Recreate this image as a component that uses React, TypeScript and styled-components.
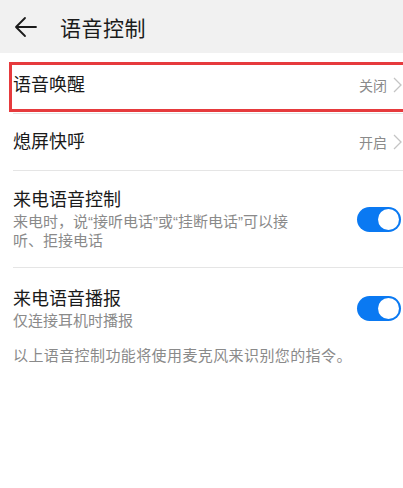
import styled, { createGlobalStyle } from "styled-components";

const GlobalStyle = createGlobalStyle`
  html, body {
    margin: 0;
    padding: 0;
    background: #ffffff;
  }
  body {
    font-family: "Liberation Sans", "Noto Sans CJK SC", sans-serif;
    overflow: hidden;
  }
`;

const Page = styled.div`
  width: 403px;
  height: 488px;
  background: #ffffff;
  overflow: hidden;
`;

const Header = styled.header`
  display: flex;
  align-items: center;
  height: 53px;
  padding: 0 0 0 14px;
  background: #f1f1f1;
  box-sizing: border-box;
`;

const BackButton = styled.button`
  display: flex;
  align-items: center;
  justify-content: center;
  width: 24px;
  height: 24px;
  padding: 0;
  border: none;
  background: none;
  color: #1b1b1b;
`;

const Title = styled.h1`
  margin: 0 0 0 22px;
  font-size: 21px;
  font-weight: 400;
  color: #1b1b1b;
  letter-spacing: 0.5px;
`;

const List = styled.div`
  display: flex;
  flex-direction: column;
  padding-top: 4px;
`;

const Row = styled.div<{ $pad?: string; $last?: boolean }>`
  position: relative;
  display: flex;
  align-items: center;
  min-height: 57px;
  margin-left: 13px;
  padding: ${(p) => p.$pad ?? "0"};
  border-bottom: ${(p) => (p.$last ? "none" : "1px solid #e5e5e5")};
  box-sizing: border-box;
`;

const Highlight = styled.div`
  position: absolute;
  top: 5px;
  left: -4px;
  right: -6px;
  bottom: 1px;
  border: 3px solid #e63a3d;
  pointer-events: none;
`;

const Texts = styled.div`
  flex: 1;
  display: flex;
  flex-direction: column;
  min-width: 0;
`;

const Label = styled.div`
  font-size: 18px;
  line-height: 24px;
  color: #1a1a1a;
`;

const Sub = styled.div`
  max-width: 295px;
  font-size: 15px;
  line-height: 19px;
  color: #8a8a8a;
`;

const Value = styled.span`
  font-size: 14px;
  color: #8a8a8a;
  margin-right: 6px;
`;

const Chevron = styled.svg`
  width: 9px;
  height: 16px;
  margin-right: 1px;
  flex-shrink: 0;
`;

const Toggle = styled.div<{ $on: boolean }>`
  position: relative;
  width: 44px;
  height: 25px;
  margin-right: 2px;
  border-radius: 13px;
  background: ${(p) => (p.$on ? "#0a79f2" : "#d0d0d0")};
  flex-shrink: 0;
`;

const Knob = styled.div<{ $on: boolean }>`
  position: absolute;
  top: 2px;
  left: ${(p) => (p.$on ? "21px" : "2px")};
  width: 21px;
  height: 21px;
  border-radius: 50%;
  background: #ffffff;
`;

const Footer = styled.p`
  margin: 0;
  padding: 0 13px;
  font-size: 15px;
  line-height: 20px;
  letter-spacing: 0.4px;
  color: #8a8a8a;
`;

const Arrow = () => (
  <svg width="24" height="22" viewBox="0 0 24 22" fill="none">
    <path
      d="M22 11H2.5M11 2L2 11L11 20"
      stroke="currentColor"
      strokeWidth="1.8"
      strokeLinecap="round"
      strokeLinejoin="round"
    />
  </svg>
);

const ChevronIcon = () => (
  <Chevron viewBox="0 0 9 16" fill="none">
    <path d="M1 1L8 8L1 15" stroke="#c4c4c4" strokeWidth="1.3" />
  </Chevron>
);

type LinkRowProps = { label: string; value: string; highlight?: boolean };

const LinkRow = ({ label, value, highlight }: LinkRowProps) => (
  <Row>
    <Texts>
      <Label>{label}</Label>
    </Texts>
    <Value>{value}</Value>
    <ChevronIcon />
    {highlight && <Highlight />}
  </Row>
);

type SwitchRowProps = {
  label: string;
  sub: string;
  on: boolean;
  pad: string;
  last?: boolean;
};

const SwitchRow = ({ label, sub, on, pad, last }: SwitchRowProps) => (
  <Row $pad={pad} $last={last}>
    <Texts>
      <Label>{label}</Label>
      <Sub>{sub}</Sub>
    </Texts>
    <Toggle $on={on}>
      <Knob $on={on} />
    </Toggle>
  </Row>
);

export default function App() {
  return (
    <Page>
      <GlobalStyle />
      <Header>
        <BackButton>
          <Arrow />
        </BackButton>
        <Title>语音控制</Title>
      </Header>
      <List>
        <LinkRow label="语音唤醒" value="关闭" highlight />
        <LinkRow label="熄屏快呼" value="开启" />
        <SwitchRow
          label="来电语音控制"
          sub="来电时，说“接听电话”或“挂断电话”可以接听、拒接电话"
          pad="17px 0"
          on
        />
        <SwitchRow
          label="来电语音播报"
          sub="仅连接耳机时播报"
          pad="19px 0 16px"
          on
          last
        />
      </List>
      <Footer>以上语音控制功能将使用麦克风来识别您的指令。</Footer>
    </Page>
  );
}
